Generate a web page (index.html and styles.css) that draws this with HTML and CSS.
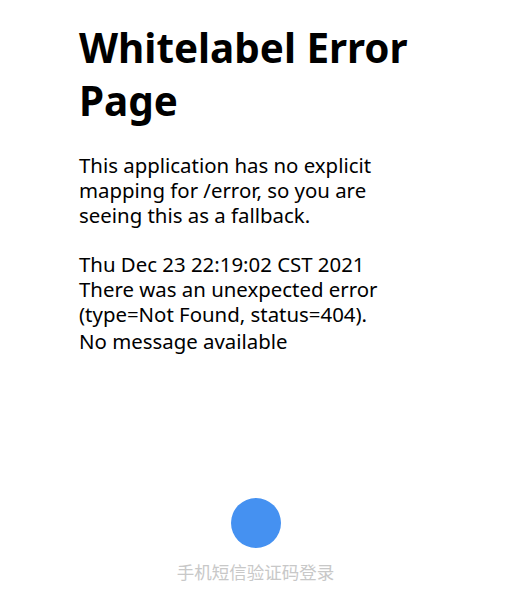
FILE: index.html
```html
<!DOCTYPE html>
<html lang="zh-CN">
<head>
<meta charset="utf-8">
<title>Error</title>
<link rel="stylesheet" href="styles.css">
</head>
<body>
<main class="page">
  <h1 class="title">Whitelabel Error Page</h1>
  <p class="intro">This application has no explicit mapping for /error, so you are seeing this as a fallback.</p>
  <div class="details">
    <div>Thu Dec 23 22:19:02 CST 2021</div>
    <div>There was an unexpected error (type=Not Found, status=404).</div>
    <div class="msg">No message available</div>
  </div>
</main>
<footer class="login">
  <div class="dot"></div>
  <div class="login-text">手机短信验证码登录</div>
</footer>
</body>
</html>
```
FILE: styles.css
```css
html, body {
  margin: 0;
  padding: 0;
  background: #fff;
}
body {
  width: 523px;
  height: 590px;
  display: flex;
  flex-direction: column;
  font-family: "Noto Sans", "Noto Sans CJK SC", sans-serif;
  color: #000;
}
.page {
  padding: 21px 79px 0 79px;
  width: 365px;
}
.title {
  margin: 0;
  font-size: 40.4px;
  line-height: 53px;
  font-weight: 700;
}
.intro {
  max-width: 326px;
  margin: 26px 0 0 0;
  font-size: 20.4px;
  line-height: 25px;
}
.details {
  max-width: 326px;
  margin-top: 24px;
  font-size: 20.4px;
  line-height: 25px;
}
.msg {
  margin-top: 2px;
}
.login {
  margin-top: auto;
  padding-bottom: 6px;
  display: flex;
  flex-direction: column;
  align-items: center;
  gap: 12px;
  transform: translateX(-6px);
}
.dot {
  width: 50px;
  height: 50px;
  border-radius: 50%;
  background: #4591f1;
}
.login-text {
  font-family: "Noto Sans CJK SC", sans-serif;
  font-size: 17.5px;
  line-height: 24px;
  color: #c8c8c8;
}
```
